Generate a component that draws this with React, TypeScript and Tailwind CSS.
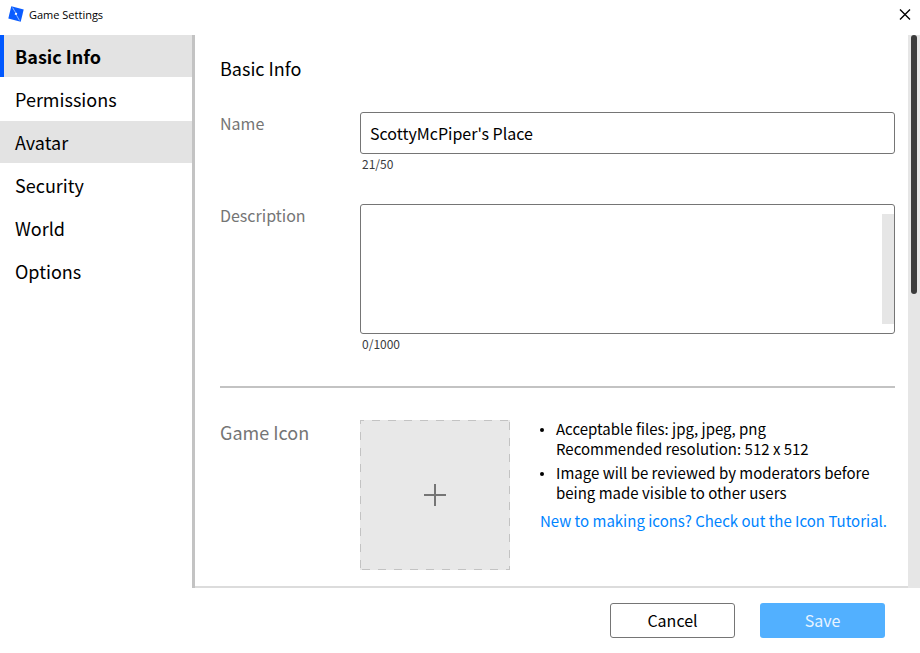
import { useState } from "react";

const sections = ["Basic Info", "Permissions", "Avatar", "Security", "World", "Options"];

function Logo() {
  return (
    <svg width="16" height="16" viewBox="0 0 16 16" aria-hidden="true">
      <path d="M3.3 0.3 15.7 3.4 12.7 15.7 0.3 12.6Z" fill="#0a5cff" />
      <path d="M4.6 1.6 7.4 6.4M8.6 9.4 11.4 14.4" stroke="#9cc4ff" strokeWidth="0.9" />
      <path d="M7.2 6.4 9.2 7 8.7 9.2 6.7 8.6Z" fill="#fff" />
    </svg>
  );
}

function TitleBar() {
  return (
    <header className="flex h-[35px] items-start justify-between pt-[6px] pl-2 pr-[9px]">
      <div className="flex items-start gap-[5px]">
        <Logo />
        <h1 className="font-['Open_Sans',sans-serif] text-[11px] leading-[18px] font-medium">Game Settings</h1>
      </div>
      <button type="button" aria-label="Close" className="pt-[3px]">
        <svg width="12" height="11" viewBox="0 0 12 11" fill="none" stroke="#000" strokeWidth="1.4" aria-hidden="true">
          <path d="M1 0.5 11 10.5M11 0.5 1 10.5" />
        </svg>
      </button>
    </header>
  );
}

function Sidebar() {
  return (
    <nav className="w-[195px] shrink-0 border-r-[3px] border-[#c3c3c3]">
      <ul className="flex flex-col gap-px">
        {sections.map((name) => (
          <li key={name}>
            <button
              type="button"
              className={
                "flex h-[42px] w-full items-center pb-px text-left text-[18px] leading-6 " +
                (name === "Basic Info"
                  ? "border-l-4 border-[#0058ff] bg-[#e3e3e3] pl-[11px] font-bold"
                  : name === "Avatar"
                    ? "bg-[#e3e3e3] pl-[15px]"
                    : "pl-[15px]")
              }
            >
              {name}
            </button>
          </li>
        ))}
      </ul>
    </nav>
  );
}

function Bullet() {
  return <span className="mt-[9px] size-1 shrink-0 rounded-full bg-black" />;
}

export default function App() {
  const [name, setName] = useState("ScottyMcPiper's Place");
  const [description, setDescription] = useState("");

  return (
    <div className="flex min-h-screen flex-col bg-white font-['Noto_Sans_CJK_SC',sans-serif] text-black">
      <TitleBar />
      <div className="flex flex-1">
        <Sidebar />
        <main className="flex flex-1 flex-col border-b-2 border-[#dcdcdc] pt-[21px] pr-[13px] pb-4 pl-[25px]">
          <h2 className="text-[18px] leading-6">Basic Info</h2>

          <div className="mt-8 flex">
            <label htmlFor="name" className="w-[140px] shrink-0 text-[16px] leading-[22px] text-[#757575]">
              Name
            </label>
            <div className="flex-1">
              <input
                id="name"
                value={name}
                onChange={(e) => setName(e.target.value)}
                className="block h-[42px] w-full rounded-[3px] border border-[#757575] px-[9px] text-[16px] outline-none"
              />
              <p className="pl-[2px] text-[12px] leading-5 text-[#393b3d]">{name.length}/50</p>
            </div>
          </div>

          <div className="mt-[30px] flex">
            <label htmlFor="description" className="w-[140px] shrink-0 text-[16px] leading-[22px] text-[#757575]">
              Description
            </label>
            <div className="flex-1">
              <div className="flex h-[130px] rounded-[3px] border border-[#757575]">
                <textarea
                  id="description"
                  value={description}
                  onChange={(e) => setDescription(e.target.value)}
                  className="flex-1 resize-none p-[9px] text-[16px] outline-none"
                />
                <div className="my-[9px] w-3 bg-[#e6e6e6]" />
              </div>
              <p className="pl-[2px] text-[12px] leading-5 text-[#393b3d]">{description.length}/1000</p>
            </div>
          </div>

          <hr className="mt-8 border-t-2 border-[#c3c3c3]" />

          <div className="mt-8 flex">
            <h3 className="w-[140px] shrink-0 text-[18px] leading-6 text-[#757575]">Game Icon</h3>
            <button type="button" aria-label="Upload game icon" className="size-[150px] shrink-0 bg-[#e8e8e8]">
              <svg width="150" height="150" viewBox="0 0 150 150" fill="none" aria-hidden="true">
                <path d="M0 .5H150M.5 0V150M149.5 150V0M150 149.5H0" stroke="#c3c3c3" strokeDasharray="8 8" strokeDashoffset="4" />
                <path d="M64 75H86M75 64V86" stroke="#757575" strokeWidth="2" />
              </svg>
            </button>
            <div className="-mt-px ml-[30px] flex-1 text-[15px] leading-5">
              <ul className="flex flex-col gap-1">
                <li className="flex gap-3">
                  <Bullet />
                  <p>
                    Acceptable files: jpg, jpeg, png
                    <br />
                    Recommended resolution: 512 x 512
                  </p>
                </li>
                <li className="flex gap-3">
                  <Bullet />
                  <p>
                    Image will be reviewed by moderators before
                    <br />
                    being made visible to other users
                  </p>
                </li>
              </ul>
              <a href="#tutorial" className="mt-2 block whitespace-nowrap text-[#0084ff]">
                New to making icons? Check out the Icon Tutorial.
              </a>
            </div>
          </div>
        </main>
        <div className="w-3 shrink-0 bg-[#e6e6e6] px-[3px]">
          <div className="h-[259px] rounded-full bg-[#3c3c3c]" />
        </div>
      </div>
      <footer className="flex justify-end gap-[25px] pt-[15px] pr-[35px] pb-[15px] text-[16px]">
        <button type="button" className="h-[35px] w-[125px] rounded-[3px] border border-[#757575] pb-px">
          Cancel
        </button>
        <button type="button" className="h-[35px] w-[125px] rounded-[3px] bg-[#52b0ff] pb-px text-[#e8f4ff]">
          Save
        </button>
      </footer>
    </div>
  );
}
